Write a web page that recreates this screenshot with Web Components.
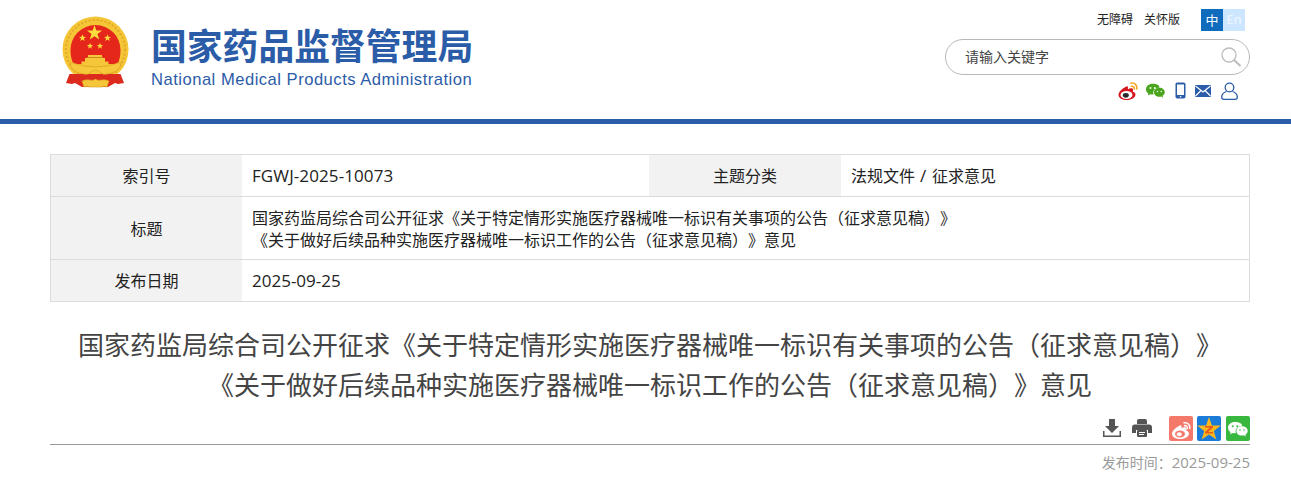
<!DOCTYPE html>
<html lang="zh"><head><meta charset="utf-8"><title>国家药品监督管理局</title>
<style>
html,body{margin:0;padding:0;background:#fff}
body{font-family:"Noto Sans CJK SC","Noto Sans",sans-serif;color:#333;width:1291px;overflow-x:hidden;text-spacing-trim:space-all}
</style></head><body>
<nmpa-header></nmpa-header>
<main-area>
  <info-table></info-table>
  <article-title>国家药监局综合司公开征求《关于特定情形实施医疗器械唯一标识有关事项的公告（征求意见稿）》<br>《关于做好后续品种实施医疗器械唯一标识工作的公告（征求意见稿）》意见</article-title>
  <share-bar></share-bar>
  <publish-time>发布时间：<span style="font-family:'Open Sans',sans-serif;font-size:15px">2025-09-25</span></publish-time>
</main-area>
<script>
function def(name,html){customElements.define(name,class extends HTMLElement{constructor(){super();this.attachShadow({mode:'open'}).innerHTML=html}})}
const star=(x,y,r,f)=>{let p=[];for(let i=0;i<10;i++){const a=-Math.PI/2+i*Math.PI/5,q=i%2?r*.4:r;p.push((x+q*Math.cos(a)).toFixed(1)+','+(y+q*Math.sin(a)).toFixed(1))}return `<polygon points="${p.join(' ')}" fill="${f}"/>`};
const emblem=`<svg width="67" height="73" viewBox="0 0 67 73">
<circle cx="33.500" cy="33.500" r="33" fill="#f4c534"/>
<circle cx="33.500" cy="33.500" r="29.500" fill="none" stroke="#e4a82a" stroke-width="2" stroke-dasharray="2 2"/>
<path d="M7.500 58L4 67l6 1 3-1 7 4h26l7-4 3 1 6-1-3.500-9z" fill="#dc2a1e"/>
<path d="M8.500 34a25 25 0 1 1 50 0c0 6-1 10-3 14H11.500c-2-4-3-8-3-14z" fill="#e4261b"/>
<path d="M26 39h14v3h3v3.500h3.500V49h-27v-3.500H23V42h3z" fill="#f5c63a"/><rect x="25" y="41" width="16" height="1" fill="#c98a1e"/>
<path d="M8 47q3-1 6 1q10 3 19.500 3T53 48q3-2 6-1l-1 4q-4 6-13 7q-4 1-6-1q-3-3-5.500-3T28 57q-2 2-6 1q-9-1-13-7z" fill="#f6c93b" stroke="#dd9f22" stroke-width=".7"/>
<path d="M20 65q4-2 8-1q3 1 5.500-1q2.500 2 5.500 1q4-1 8 1l-2 6q-3-1-6 0H28q-3-1-6 0z" fill="#f5c63a" stroke="#d89a1c" stroke-width=".6"/>
${star(32.500,17,8,'#fbdc3d')}${star(20.500,22,3.700,'#fbdc3d')}${star(45.500,22,3.700,'#fbdc3d')}${star(28,30,3.300,'#fbdc3d')}${star(38,30,3.300,'#fbdc3d')}
</svg>`;
const mag=`<svg width="22" height="22" viewBox="0 0 22 22" fill="none" stroke="#bcbcbc"><circle cx="9" cy="9" r="7" stroke-width="1.300"/><path d="M14 14l6.500 6" stroke-width="2"/></svg>`;
const wx=(bg,fg)=>`<path d="M8 3C3.900 3 1 5.600 1 8.800c0 1.800 1 3.300 2.500 4.300L3 15.300l2.500-1.400c.8.200 1.600.3 2.500.3.300 0 .6 0 .9-.1-.2-.6-.3-1.100-.3-1.700 0-3 2.800-5.300 6.200-5.300C15.900 4.700 12.300 3 8 3z" fill="${fg}"/><path d="M15 7.200c-3.200 0-5.600 2.100-5.600 4.700s2.400 4.700 5.600 4.700c.6 0 1.300-.1 1.900-.3l2 1.200-.5-1.900c1.400-.9 2.300-2.200 2.300-3.700 0-2.600-2.500-4.700-5.700-4.700z" fill="${fg}"/><circle cx="5.700" cy="7.300" r="1" fill="${bg}"/><circle cx="10.300" cy="7.300" r="1" fill="${bg}"/><circle cx="13" cy="11" r=".8" fill="${bg}"/><circle cx="17" cy="11" r=".8" fill="${bg}"/>`;

def('nmpa-header',`<style>
:host{display:block;height:119px;border-bottom:5px solid #2b5ca8}
.wrap{width:1200px;height:119px;margin-left:50px;display:flex;justify-content:space-between}
.brand{display:flex;margin-left:12px;gap:22px;padding-top:16px;height:80px;align-items:flex-start}
.names{display:flex;flex-direction:column;color:#2b5ca8;width:322px}
.cn{font-size:35.800px;line-height:36px;font-weight:700;margin-top:10px;white-space:nowrap}
.en{font-family:"Liberation Sans",sans-serif;font-size:16.600px;line-height:20px;margin-top:8px;white-space:nowrap;letter-spacing:.49px}
.right{width:305px;display:flex;flex-direction:column;align-items:flex-end}
.top{display:flex;align-items:flex-start;height:22px;margin-top:9px;font-size:12px;line-height:20px;color:#222;margin-right:5px}
.top span{margin-right:11px}.top span:nth-child(2){margin-right:21px}
.lang{width:22px;height:22px;line-height:21px;text-align:center;background:#0f6cbd;color:#fff;font-size:13px;margin:0!important}
.lang.en2{background:#cce6ff;color:#eaf5ff;font-family:"Open Sans",sans-serif;font-weight:600;font-size:13px}
.search{box-sizing:border-box;width:305px;height:36px;margin-top:8px;border:1px solid #b8b8b8;border-radius:18px;display:flex;align-items:center;justify-content:space-between;padding:0 7px 2px 19px;font-size:14px;color:#444}
.search svg{display:block;margin-top:2px}
.icons{display:flex;align-items:center;margin-top:6px;height:19px;margin-right:12px}
.icons svg{display:block}
</style><div class="wrap"><div class="brand">${emblem}<div class="names"><div class="cn">国家药品监督管理局</div><div class="en">National Medical Products Administration</div></div></div>
<div class="right"><div class="top"><span>无障碍</span><span>关怀版</span><span class="lang">中</span><span class="lang en2">En</span></div>
<div class="search"><span>请输入关键字</span>${mag}</div>
<div class="icons">
<svg width="20" height="18" viewBox="0 0 20 18" style="margin-right:8px"><path d="M7.500 5C4 6.800.5 10 .5 13c0 3 4 5 8.500 5s8.500-2.500 8.500-5.500c0-1.800-1.500-2.500-2.700-2.800.5-1.300.5-2.500-.4-3.100-1.200-.8-3.200-.1-4.600.6.400-1.300.3-2.400-.4-2.900-.5-.2-1.200 0-1.900.7z" fill="#d6161f"/><ellipse cx="8.500" cy="13" rx="6" ry="4" fill="#fff"/><ellipse cx="7.800" cy="13.300" rx="3" ry="2.400" fill="#2a2a2a"/><path d="M13 1.200c3.400-.8 6.500 2.200 5.700 5.700M13.500 4.300c1.700-.4 3.100 1 2.800 2.700" fill="none" stroke="#f4a623" stroke-width="1.600" stroke-linecap="round"/></svg>
<svg width="20" height="18" viewBox="1 2 21 17" style="margin-right:9px">${wx('#fff','#4aa51d')}</svg>
<svg width="11" height="17" viewBox="0 0 11 17" style="margin-right:9px"><rect x=".5" y=".5" width="10" height="16" rx="1.800" fill="#2b5ca8"/><rect x="2" y="2.500" width="7" height="10.500" fill="#fff"/><circle cx="5.500" cy="14.800" r=".8" fill="#fff"/></svg>
<svg width="16" height="12" viewBox="0 0 16 12" style="margin-right:10px"><rect width="16" height="12" rx="1" fill="#2b5ca8"/><path d="M.5 1l7.500 6 7.500-6M.5 11l5.500-5.500M15.500 11L10 5.500" fill="none" stroke="#fff" stroke-width="1.100"/></svg>
<svg width="17" height="18" viewBox="0 0 17 18" fill="none" stroke="#2b5ca8" stroke-width="1.300"><circle cx="8.500" cy="5.500" r="4.300"/><path d="M5.500 9.500C2.500 10.500.7 12.500.7 15c0 1.500 1 2.300 2.300 2.300h11c1.300 0 2.300-.8 2.300-2.300 0-2.500-1.800-4.500-4.800-5.500"/></svg>
</div></div></div>`);

def('main-area',`<style>:host{display:block;width:1200px;margin:30px 0 0 50px}</style><slot></slot>`);

const L=(t,ls)=>`<span class="lat" style="letter-spacing:${ls}px">${t}</span>`;
const row=(cells,h)=>`<div class="row" style="height:${h}px">${cells}</div>`;
def('info-table',`<style>
:host{display:block;border:1px solid #dcdcdc;font-size:16px;line-height:22px;color:#222}
.row{display:flex;border-bottom:1px solid #dcdcdc;box-sizing:border-box;padding:0}.row:last-child{border-bottom:0}
.k{width:191px;flex:none;background:#f2f2f2;display:flex;align-items:center;justify-content:center;padding-bottom:1px;box-sizing:border-box}
.v{flex:1;padding:0 10px 1px;display:block;min-width:0;align-self:center}
.v.a{flex:none;width:407px;box-sizing:border-box}
.lat{font-family:"Open Sans",sans-serif;font-size:17px}
</style>
${row(`<div class="k">索引号</div><div class="v a">${L('FGWJ-2025-10073',.1)}</div><div class="k" style="width:192px">主题分类</div><div class="v">法规文件${L(' / ',.6)}征求意见</div>`,42)}
${row(`<div class="k">标题</div><div class="v">国家药监局综合司公开征求《关于特定情形实施医疗器械唯一标识有关事项的公告（征求意见稿）》<br>《关于做好后续品种实施医疗器械唯一标识工作的公告（征求意见稿）》意见</div>`,63)}
${row(`<div class="k">发布日期</div><div class="v">${L('2025-09-25',0)}</div>`,41)}`);

def('article-title',`<style>:host{display:block;margin-top:22px;font-size:26px;line-height:40px;text-align:center;color:#444;white-space:nowrap;padding-bottom:1px}</style><slot></slot>`);

def('share-bar',`<style>
:host{display:flex;justify-content:flex-end;align-items:center;height:27px;margin-top:10px;border-bottom:1px solid #999;padding-bottom:2px}
svg{display:block}
.t{margin-bottom:2px}
</style>
<svg class="t" width="20" height="20" viewBox="0 0 20 20" style="margin-right:10px" fill="#555"><path d="M7 1h6v7h4l-7 7-7-7h4z"/><path d="M1 13h1.500v4.500h15V13H19v6H1z"/></svg>
<svg class="t" width="20" height="20" viewBox="0 0 20 20" style="margin-right:17px" fill="#555"><path d="M5 3a2 2 0 012-2h6a2 2 0 012 2v3H5z"/><path d="M3 6.500h14a3 3 0 013 3V15h-4v-3H4v3H0V9.500a3 3 0 013-3z"/><rect x="5" y="12" width="10" height="7" rx="1"/><path d="M7 14.500h6M7 16.500h5" stroke="#fff"/></svg>
<svg width="24" height="25" viewBox="0 0 24 25" style="margin-right:4px"><rect width="24" height="25" rx="2" fill="#f5796b"/><g transform="translate(2 3)"><path d="M8 7C4.500 8.800 1 12 1 15c0 3 4 5 8.500 5S18 17.500 18 14.500c0-1.800-1.500-2.500-2.700-2.800.5-1.300.5-2.500-.4-3.100-1.200-.8-3.200-.1-4.600.6.400-1.300.3-2.400-.4-2.900-.5-.2-1.200 0-1.900.7z" fill="#fff"/><ellipse cx="9" cy="15" rx="5" ry="3.400" fill="#f5796b"/><ellipse cx="8.300" cy="15.300" rx="2.500" ry="2" fill="#fff"/><path d="M13 3.800c3.400-.8 6.500 2.200 5.700 5.700M13.500 6.700c1.700-.4 3.100 1 2.800 2.700" fill="none" stroke="#fff" stroke-width="1.500" stroke-linecap="round"/></g></svg>
<svg width="24" height="25" viewBox="0 0 24 25" style="margin-right:5px"><rect width="24" height="25" rx="2" fill="#1a7bd8"/>${star(12,13.500,12.500,'#fbb81e')}<path d="M8 10h8v1.500L11 16h5v1.500H8V16l5-4.500H8z" fill="#e8591a"/></svg>
<svg width="24" height="25" viewBox="0 0 24 25"><rect width="24" height="25" rx="2" fill="#38b83f"/><g transform="translate(1 3)">${wx('#38b83f','#fff')}</g></svg>`);

def('publish-time',`<style>:host{display:block;text-align:right;font-size:14px;line-height:20px;margin-top:7px;color:#999}</style><slot></slot>`);
</script>
</body></html>
